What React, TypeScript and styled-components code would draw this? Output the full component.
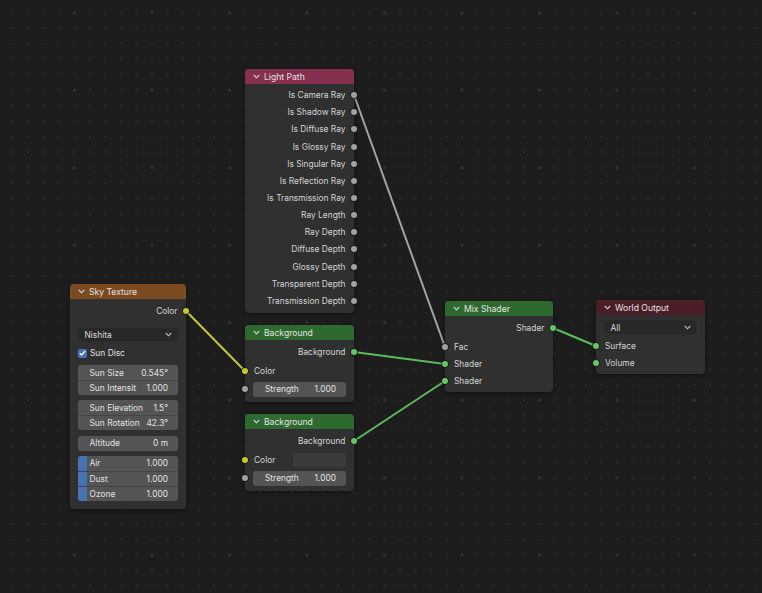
import React from "react";
import styled, { createGlobalStyle } from "styled-components";

const GlobalStyle = createGlobalStyle`
  html, body { margin: 0; padding: 0; background: #1d1d1d; }
  body { font-family: Inter, "Noto Sans", "DejaVu Sans", sans-serif; }
`;

const HEADER = {
  texture: "#7b4a21",
  input: "#85304e",
  shader: "#2e6a2f",
  output: "#4b1f28",
};

const SOCKET = {
  color: "#c7c729",
  float: "#a1a1a1",
  shader: "#63c763",
};

type SocketKind = keyof typeof SOCKET;

const LINKS = [
  { x1: 186, y1: 311, x2: 245, y2: 371, color: "#c4c43c" },
  { x1: 354, y1: 95, x2: 445, y2: 347, color: "#a4a4a4" },
  { x1: 354, y1: 352, x2: 445, y2: 364, color: "#5cbc5c" },
  { x1: 354, y1: 441, x2: 445, y2: 381, color: "#5cbc5c" },
  { x1: 553, y1: 328, x2: 596, y2: 346, color: "#5cbc5c" },
];

const LIGHT_PATH_OUTPUTS = [
  "Is Camera Ray",
  "Is Shadow Ray",
  "Is Diffuse Ray",
  "Is Glossy Ray",
  "Is Singular Ray",
  "Is Reflection Ray",
  "Is Transmission Ray",
  "Ray Length",
  "Ray Depth",
  "Diffuse Depth",
  "Glossy Depth",
  "Transparent Depth",
  "Transmission Depth",
];

const Canvas = styled.div`
  position: relative;
  width: 762px;
  height: 593px;
  overflow: hidden;
  background-color: #1d1d1d;
  background-image: radial-gradient(circle, #363636 0 1.1px, transparent 1.8px),
    radial-gradient(circle, #2a2a2a 0 0.9px, transparent 1.5px);
  background-size: 77.5px 77.5px, 15.5px 15.5px;
  background-position: 35.75px 51.45px, 4.75px 4.95px;
`;

const Wires = styled.svg`
  position: absolute;
  inset: 0;
  pointer-events: none;
`;

const NodeBox = styled.div<{ $x: number; $y: number; $w: number }>`
  position: absolute;
  left: ${(p) => p.$x}px;
  top: ${(p) => p.$y}px;
  width: ${(p) => p.$w}px;
  background: #303030;
  border-radius: 4px;
  box-shadow: 0 1px 5px rgba(0, 0, 0, 0.45);
  color: #d4d4d4;
  font-size: 8.4px;
`;

const Header = styled.div<{ $color: string }>`
  height: 15px;
  display: flex;
  align-items: center;
  gap: 4px;
  padding-left: 8px;
  background: ${(p) => p.$color};
  border-radius: 4px 4px 0 0;
  color: #e2e2e2;
  font-size: 8.6px;
`;

const Body = styled.div<{ $pt: number; $pb: number }>`
  display: flex;
  flex-direction: column;
  padding: ${(p) => p.$pt}px 0 ${(p) => p.$pb}px;
`;

const Row = styled.div<{ $out?: boolean; $h?: number; $mt?: number }>`
  position: relative;
  height: ${(p) => p.$h ?? 17}px;
  margin-top: ${(p) => p.$mt ?? 0}px;
  display: flex;
  align-items: center;
  justify-content: ${(p) => (p.$out ? "flex-end" : "space-between")};
  padding: 0 8.5px 0 9px;
  white-space: nowrap;
`;

const Socket = styled.span<{ $kind: SocketKind; $out?: boolean }>`
  position: absolute;
  top: 50%;
  ${(p) => (p.$out ? "right: -3px;" : "left: -3px;")}
  width: 6px;
  height: 6px;
  margin-top: -3px;
  border-radius: 50%;
  background: ${(p) => SOCKET[p.$kind]};
  box-shadow: 0 0 0 0.7px #161616;
`;

const Select = styled.div<{ $mt: number }>`
  height: 15px;
  margin: ${(p) => p.$mt}px 8px 0 7.5px;
  box-sizing: border-box;
  display: flex;
  align-items: center;
  justify-content: space-between;
  padding: 0 5px 0 6px;
  background: #282828;
  border: 1px solid #2c2c2c;
  border-radius: 3px;
  color: #dcdcdc;
`;

const CheckRow = styled.div`
  height: 16px;
  margin-top: 3px;
  display: flex;
  align-items: center;
  gap: 3px;
  padding-left: 8px;
  color: #e0e0e0;
`;

const CheckBox = styled.span`
  width: 9px;
  height: 9px;
  border-radius: 2px;
  background: #4772b3;
  display: flex;
  align-items: center;
  justify-content: center;
`;

const Stack = styled.div`
  display: flex;
  flex-direction: column;
  gap: 5.3px;
  margin: 4px 8px 0 7.5px;
`;

const FieldGroup = styled.div`
  display: flex;
  flex-direction: column;
  border-radius: 3px;
  overflow: hidden;
`;

const Field = styled.div<{ $grow?: boolean }>`
  position: relative;
  height: 15px;
  box-sizing: border-box;
  flex: ${(p) => (p.$grow ? 1 : "none")};
  display: flex;
  align-items: center;
  justify-content: space-between;
  padding: 0 10px 0 12px;
  background: #545454;
  color: #e2e2e2;
  white-space: nowrap;
  border-radius: ${(p) => (p.$grow ? "3px" : "0")};

  & + & {
    border-top: 1px solid #444444;
  }
`;

const FieldText = styled.span`
  position: relative;
`;

const Fill = styled.span`
  position: absolute;
  left: 0;
  top: 0;
  bottom: 0;
  background: #4772b3;
`;

const FieldRow = styled.div<{ $mt: number }>`
  position: relative;
  height: 15px;
  margin-top: ${(p) => p.$mt}px;
  display: flex;
  padding: 0 8px;
`;

const Swatch = styled.span`
  width: 53px;
  height: 14px;
  border-radius: 3px;
  background: #3b3b3b;
`;

const Chevron = ({ color = "#d8d8d8" }: { color?: string }) => (
  <svg width="7" height="5" viewBox="0 0 7 5">
    <path d="M0.8 1 L3.5 3.8 L6.2 1" fill="none" stroke={color} strokeWidth="1.1" />
  </svg>
);

type NodeProps = {
  x: number;
  y: number;
  w: number;
  title: string;
  color: string;
  children: React.ReactNode;
};

const Node = ({ x, y, w, title, color, children }: NodeProps) => (
  <NodeBox $x={x} $y={y} $w={w}>
    <Header $color={color}>
      <Chevron />
      <span>{title}</span>
    </Header>
    {children}
  </NodeBox>
);

const NumField = ({ label, value, fill }: { label: string; value: string; fill?: number }) => (
  <Field>
    {fill !== undefined && <Fill style={{ width: `${fill * 100}%` }} />}
    <FieldText>{label}</FieldText>
    <FieldText>{value}</FieldText>
  </Field>
);

const BackgroundNode = ({ y, swatch }: { y: number; swatch?: boolean }) => (
  <Node x={245} y={y} w={109} title="Background" color={HEADER.shader}>
    <Body $pt={3.5} $pb={5.5}>
      <Row $out>
        Background
        <Socket $kind="shader" $out />
      </Row>
      <Row $mt={2}>
        Color
        {swatch && <Swatch />}
        <Socket $kind="color" />
      </Row>
      <FieldRow $mt={2}>
        <Field $grow>
          <FieldText>Strength</FieldText>
          <FieldText>1.000</FieldText>
        </Field>
        <Socket $kind="float" />
      </FieldRow>
    </Body>
  </Node>
);

export default function App() {
  return (
    <Canvas>
      <GlobalStyle />
      <Wires width={762} height={593}>
        {LINKS.map((l, i) => (
          <line key={i} x1={l.x1} y1={l.y1} x2={l.x2} y2={l.y2} stroke={l.color} strokeWidth={2} strokeLinecap="round" />
        ))}
      </Wires>

      <Node x={70} y={284} w={116} title="Sky Texture" color={HEADER.texture}>
        <Body $pt={3.5} $pb={8}>
          <Row $out>
            Color
            <Socket $kind="color" $out />
          </Row>
          <Select $mt={7.5}>
            <span>Nishita</span>
            <Chevron color="#bbbbbb" />
          </Select>
          <CheckRow>
            <CheckBox>
              <svg width="7" height="6" viewBox="0 0 7 6">
                <path d="M0.8 3.2 L2.7 5 L6.2 0.9" fill="none" stroke="#ffffff" strokeWidth="1.3" />
              </svg>
            </CheckBox>
            Sun Disc
          </CheckRow>
          <Stack>
            <FieldGroup>
              <NumField label="Sun Size" value="0.545°" />
              <NumField label="Sun Intensit" value="1.000" />
            </FieldGroup>
            <FieldGroup>
              <NumField label="Sun Elevation" value="1.5°" />
              <NumField label="Sun Rotation" value="42.3°" />
            </FieldGroup>
            <FieldGroup>
              <NumField label="Altitude" value="0 m" />
            </FieldGroup>
            <FieldGroup>
              <NumField label="Air" value="1.000" fill={0.09} />
              <NumField label="Dust" value="1.000" fill={0.09} />
              <NumField label="Ozone" value="1.000" fill={0.09} />
            </FieldGroup>
          </Stack>
        </Body>
      </Node>

      <Node x={245} y={69} w={109} title="Light Path" color={HEADER.input}>
        <Body $pt={2.5} $pb={3.3}>
          {LIGHT_PATH_OUTPUTS.map((name) => (
            <Row key={name} $out $h={17.17}>
              {name}
              <Socket $kind="float" $out />
            </Row>
          ))}
        </Body>
      </Node>

      <BackgroundNode y={325} />
      <BackgroundNode y={414} swatch />

      <Node x={445} y={301} w={108} title="Mix Shader" color={HEADER.shader}>
        <Body $pt={3.5} $pb={2.5}>
          <Row $out>
            Shader
            <Socket $kind="shader" $out />
          </Row>
          <Row $mt={2}>
            Fac
            <Socket $kind="float" />
          </Row>
          <Row>
            Shader
            <Socket $kind="shader" />
          </Row>
          <Row>
            Shader
            <Socket $kind="shader" />
          </Row>
        </Body>
      </Node>

      <Node x={596} y={300} w={109} title="World Output" color={HEADER.output}>
        <Body $pt={0} $pb={2.5}>
          <Select $mt={5}>
            <span>All</span>
            <Chevron color="#bbbbbb" />
          </Select>
          <Row $mt={2.5}>
            Surface
            <Socket $kind="shader" />
          </Row>
          <Row>
            Volume
            <Socket $kind="shader" />
          </Row>
        </Body>
      </Node>
    </Canvas>
  );
}
